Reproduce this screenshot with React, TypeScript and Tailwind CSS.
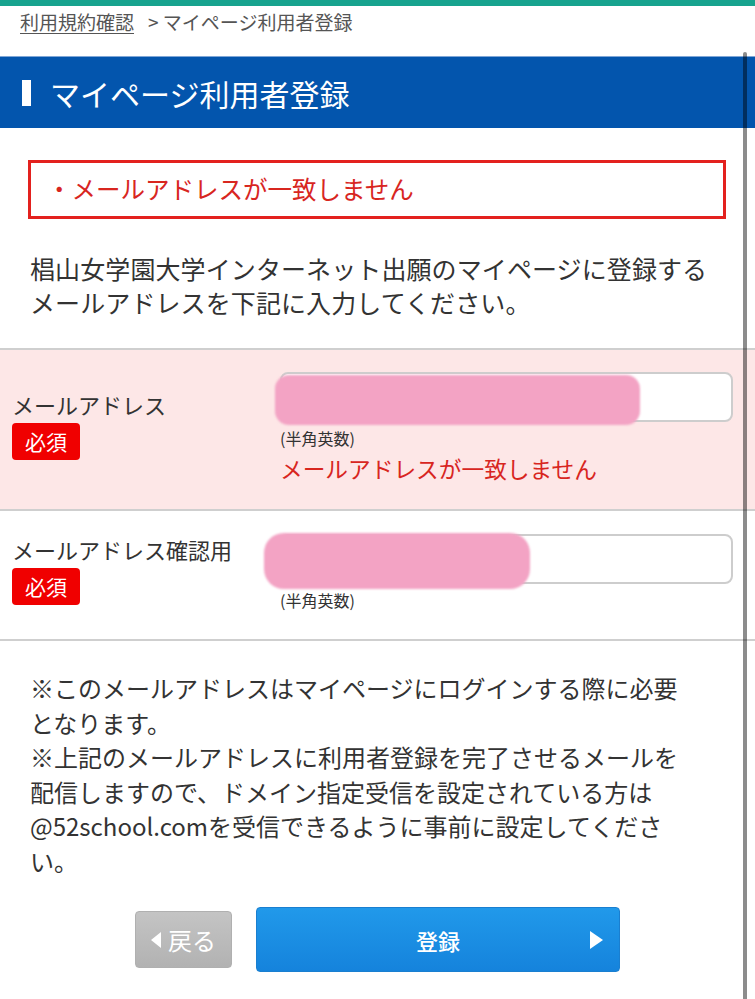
import React from "react";

const font = { fontFamily: '"Noto Sans CJK JP", "Noto Sans", sans-serif' };

function Badge() {
  return (
    <div className="mt-[4px] flex h-[37px] w-[68px] items-center justify-center rounded-[4px] bg-[#f00000] text-[21px] leading-none text-white">
      必須
    </div>
  );
}

export default function App() {
  return (
    <div className="relative min-h-[999px] w-[755px] overflow-hidden bg-white text-[#333]" style={font}>
      <div className="h-[6px] bg-[#17a38e]" />
      <div className="flex h-[30px] items-center px-[20px] text-[19px] leading-none text-[#555]">
        <span className="underline underline-offset-[3px]">利用規約確認</span>
        <span className="ml-[14px]">&gt; マイページ利用者登録</span>
      </div>
      <div className="mt-[20px] flex h-[72px] items-center border-t border-[#7fa6d6] bg-[#0355ad] pl-[22px]">
        <div className="h-[26px] w-[9px] bg-white" />
        <div className="ml-[19px] text-[30px] leading-none text-white">マイページ利用者登録</div>
      </div>

      <div className="mx-[28px] mt-[32px] flex h-[59px] w-[698px] items-center border-[3px] border-[#e3211e] pl-[16px] text-[24.5px] text-[#d8261f]">
        ・メールアドレスが一致しません
      </div>

      <p className="mt-[32px] pl-[30px] text-[25px] leading-[34px] tracking-[0.1px] text-[#333]">
        椙山女学園大学インターネット出願のマイページに登録する
        <br />
        メールアドレスを下記に入力してください。
      </p>

      <div className="mt-[29px] border-t-2 border-[#cfcfcf]" />
      <div className="flex items-center bg-[#fde7e7] pb-[25px] pt-[22px]">
        <div className="w-[280px] pb-[8px] pl-[12px]">
          <div className="text-[22px] leading-[30px]">メールアドレス</div>
          <Badge />
        </div>
        <div className="w-[453px]">
          <div className="relative h-[50px] rounded-[8px] border-2 border-[#cdcdcd] bg-white">
            <div className="absolute left-[-7px] top-[1px] h-[50px] w-[365px] rounded-[14px] bg-[#f3a3c4] blur-[1px]" />
          </div>
          <div className="mt-[6px] text-[16px] leading-[20px] text-[#333]">(半角英数)</div>
          <div className="mt-[6px] text-[22.7px] leading-[30px] text-[#d8261f]">メールアドレスが一致しません</div>
        </div>
      </div>
      <div className="border-t-2 border-[#cfcfcf]" />
      <div className="flex items-center bg-white pb-[29px] pt-[23px]">
        <div className="w-[280px] pb-[5px] pl-[12px]">
          <div className="text-[22px] leading-[30px]">メールアドレス確認用</div>
          <Badge />
        </div>
        <div className="w-[453px]">
          <div className="relative h-[50px] rounded-[8px] border-2 border-[#cdcdcd] bg-white">
            <div className="absolute left-[-18px] top-[-3px] h-[56px] w-[266px] rounded-[20px] bg-[#f3a3c4] blur-[1px]" />
          </div>
          <div className="mt-[6px] text-[16px] leading-[20px] text-[#333]">(半角英数)</div>
        </div>
      </div>
      <div className="border-t-2 border-[#cfcfcf]" />

      <p className="mt-[30px] pl-[30px] text-[24px] leading-[34.5px] text-[#333]">
        ※このメールアドレスはマイページにログインする際に必要
        <br />
        となります。
        <br />
        ※上記のメールアドレスに利用者登録を完了させるメールを
        <br />
        配信しますので、ドメイン指定受信を設定されている方は
        <br />
        @52school.comを受信できるように事前に設定してくださ
        <br />
        い。
      </p>

      <div className="mt-[29px] flex items-center pl-[135px]">
        <div className="flex h-[57px] w-[97px] items-center justify-center rounded-[4px] border border-[#b0b0b0] bg-gradient-to-b from-[#c4c4c4] to-[#b2b2b2] text-[24px] leading-none text-white">
          <svg width="10" height="16" viewBox="0 0 10 16" className="mr-[7px]">
            <polygon points="10,0 10,16 0,8" fill="white" />
          </svg>
          戻る
        </div>
        <div className="relative ml-[24px] flex h-[65px] w-[364px] items-center justify-center rounded-[4px] border border-[#1a7fd0] bg-gradient-to-b from-[#2199ea] to-[#1583dc] text-[22px] font-medium leading-none text-white">
          登録
          <svg width="13" height="18" viewBox="0 0 13 18" className="absolute right-[16px] top-[23px]">
            <polygon points="0,0 13,9 0,18" fill="white" />
          </svg>
        </div>
      </div>

      <div className="absolute left-[743px] top-[52px] h-[960px] w-[4px] rounded-t-full bg-black/45" />
    </div>
  );
}
